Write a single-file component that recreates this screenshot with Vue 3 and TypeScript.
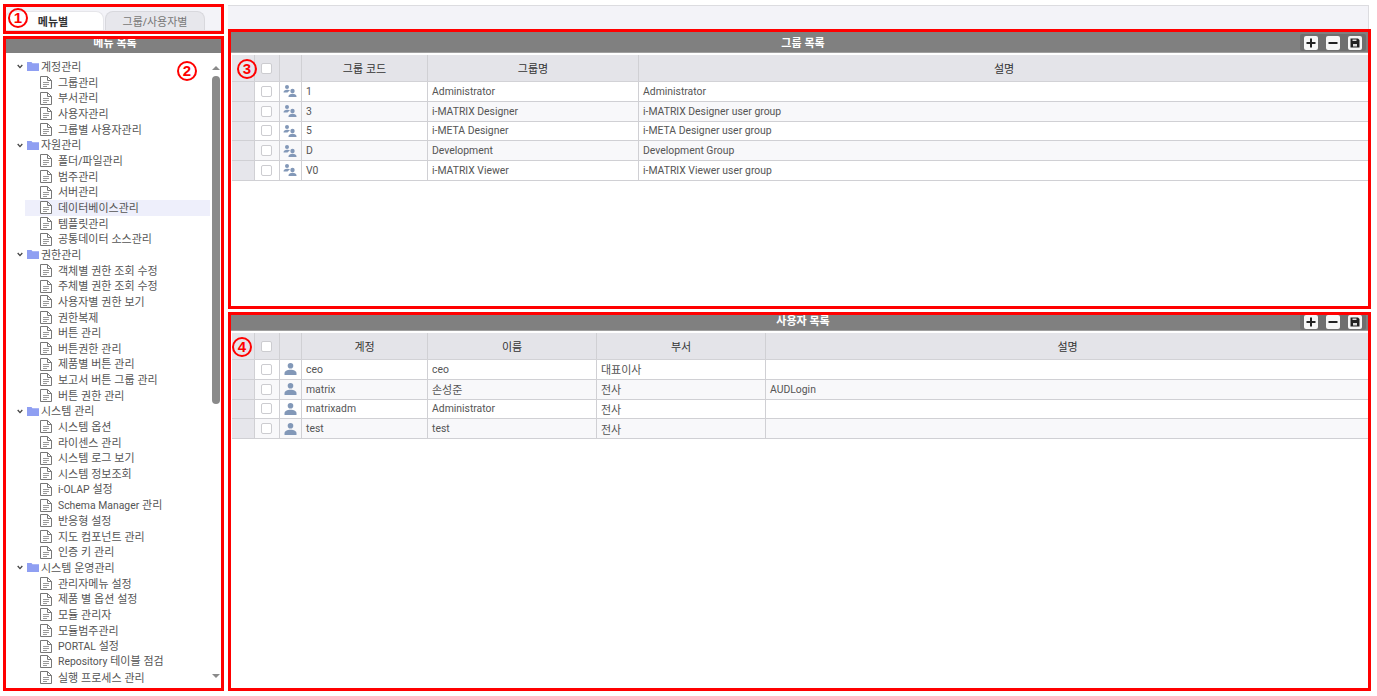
<script setup lang="ts">
interface Node { label: string; children: string[] }
const tree: Node[] = [
  { label: '계정관리', children: ['그룹관리', '부서관리', '사용자관리', '그룹별 사용자관리'] },
  { label: '자원관리', children: ['폴더/파일관리', '범주관리', '서버관리', '데이터베이스관리', '템플릿관리', '공통데이터 소스관리'] },
  { label: '권한관리', children: ['객체별 권한 조회 수정', '주체별 권한 조회 수정', '사용자별 권한 보기', '권한복제', '버튼 관리', '버튼권한 관리', '제품별 버튼 관리', '보고서 버튼 그룹 관리', '버튼 권한 관리'] },
  { label: '시스템 관리', children: ['시스템 옵션', '라이센스 관리', '시스템 로그 보기', '시스템 정보조회', 'i-OLAP 설정', 'Schema Manager 관리', '반응형 설정', '지도 컴포넌트 관리', '인증 키 관리'] },
  { label: '시스템 운영관리', children: ['관리자메뉴 설정', '제품 별 옵션 설정', '모듈 관리자', '모듈범주관리', 'PORTAL 설정', 'Repository 테이블 점검', '실행 프로세스 관리'] },
]
const groupCols = ['그룹 코드', '그룹명', '설명']
const groupRows = [
  ['1', 'Administrator', 'Administrator'],
  ['3', 'i-MATRIX Designer', 'i-MATRIX Designer user group'],
  ['5', 'i-META Designer', 'i-META Designer user group'],
  ['D', 'Development', 'Development Group'],
  ['V0', 'i-MATRIX Viewer', 'i-MATRIX Viewer user group'],
]
const userCols = ['계정', '이름', '부서', '설명']
const userRows = [
  ['ceo', 'ceo', '대표이사', ''],
  ['matrix', '손성준', '전사', 'AUDLogin'],
  ['matrixadm', 'Administrator', '전사', ''],
  ['test', 'test', '전사', ''],
]
// Latin runs are set in a narrower face than the Hangul around them
const segs = (s: string): string[] =>
  s.split(/([A-Za-z0-9][A-Za-z0-9 \-]*[A-Za-z0-9]|[A-Za-z0-9])/).filter(Boolean)
const isLat = (s: string): boolean => /^[A-Za-z0-9]/.test(s)
</script>

<template>
  <div class="page">
    <aside class="side">
      <div class="tabs">
        <div class="tab active">메뉴별</div>
        <div class="tab">그룹/사용자별</div>
      </div>
      <div class="bar side-bar">메뉴 목록</div>
      <div class="tree-wrap">
        <ul class="tree">
          <template v-for="n in tree" :key="n.label">
            <li class="row parent">
              <svg class="chev" width="6" height="5" viewBox="0 0 6 5"><path d="M.7 1 3 3.6 5.3 1" fill="none" stroke="#444" stroke-width="1.3" /></svg>
              <svg class="folder" width="12" height="9" viewBox="0 0 12 9"><path d="M0 0h4.5l1 1.2H12V9H0z" fill="#8f9ff2" /></svg>
              <span>{{ n.label }}</span>
            </li>
            <li v-for="c in n.children" :key="n.label + c" class="row leaf" :class="{ sel: c === '데이터베이스관리' }">
              <svg class="doc" width="12" height="13" viewBox="0 0 12 13"><path d="M.5.5h7l4 4v8H.5z M7.5.5v4h4" fill="#fff" stroke="#777" /><path d="M3 6.5h6M3 8.5h6M3 10.5h4" stroke="#999" fill="none" /></svg>
              <span><span v-for="(t, k) in segs(c)" :key="k" :class="{ lat: isLat(t) }">{{ t }}</span></span>
            </li>
          </template>
        </ul>
        <div class="scroll">
          <i class="arrow up"></i>
          <div class="thumb"></div>
          <div class="grow"></div>
          <i class="arrow down"></i>
        </div>
      </div>
    </aside>

    <main class="main">
      <div class="strip"></div>

      <section class="panel first">
        <div class="bar main-bar">
          <span>그룹 목록</span>
          <div class="tools">
            <b><svg width="10" height="10" viewBox="0 0 10 10"><path d="M5 .5v9M.5 5h9" stroke="#222" stroke-width="2" /></svg></b>
            <b><svg width="10" height="10" viewBox="0 0 10 10"><path d="M.5 5h9" stroke="#222" stroke-width="2" /></svg></b>
            <b><svg width="10" height="10" viewBox="0 0 10 10"><path d="M.5.5h7.5l1.500 1.500v7.500h-9z" fill="#222" /><path d="M2.500 1.500h4v1.500h-4z" fill="#ddd" /><path d="M3 6h4v2.500H3z" fill="#ddd" /></svg></b>
          </div>
        </div>
        <div class="grid group-grid head">
          <div class="c num"></div>
          <div class="c ck"><i class="box"></i></div>
          <div class="c ic"></div>
          <div v-for="h in groupCols" :key="h" class="c th">{{ h }}</div>
        </div>
        <div v-for="(r, i) in groupRows" :key="r[0]" class="grid group-grid body" :class="{ odd: i % 2 === 1 }">
          <div class="c num"></div>
          <div class="c ck"><i class="box"></i></div>
          <div class="c ic">
            <svg width="14" height="12" viewBox="0 0 14 12" fill="#8298b8"><circle cx="4" cy="2" r="2" /><path d="M.5 7.500c0-2 1.500-2.800 3.500-2.800 1.300 0 2.400.3 3 1.100-1 .3-2 .9-2.400 1.700z" /><circle cx="9.500" cy="6" r="2.200" /><path d="M5.500 12v-.5c0-2 1.800-2.800 4-2.800s4 .8 4 2.800v.5z" /></svg>
          </div>
          <div v-for="(v, j) in r" :key="j" class="c td"><span v-for="(t, k) in segs(v)" :key="k" :class="{ lat: isLat(t) }">{{ t }}</span></div>
        </div>
      </section>

      <section class="panel second">
        <div class="bar main-bar short">
          <span>사용자 목록</span>
          <div class="tools">
            <b><svg width="10" height="10" viewBox="0 0 10 10"><path d="M5 .5v9M.5 5h9" stroke="#222" stroke-width="2" /></svg></b>
            <b><svg width="10" height="10" viewBox="0 0 10 10"><path d="M.5 5h9" stroke="#222" stroke-width="2" /></svg></b>
            <b><svg width="10" height="10" viewBox="0 0 10 10"><path d="M.5.5h7.500l1.500 1.500v7.500h-9z" fill="#222" /><path d="M2.500 1.500h4v1.500h-4z" fill="#ddd" /><path d="M3 6h4v2.500H3z" fill="#ddd" /></svg></b>
          </div>
        </div>
        <div class="grid user-grid head">
          <div class="c num"></div>
          <div class="c ck"><i class="box"></i></div>
          <div class="c ic"></div>
          <div v-for="h in userCols" :key="h" class="c th">{{ h }}</div>
        </div>
        <div v-for="(r, i) in userRows" :key="r[0]" class="grid user-grid body" :class="{ odd: i % 2 === 1 }">
          <div class="c num"></div>
          <div class="c ck"><i class="box"></i></div>
          <div class="c ic">
            <svg width="13" height="12" viewBox="0 0 13 12" fill="#8298b8"><circle cx="6.500" cy="2.800" r="2.800" /><path d="M.5 12v-1.500c0-2.500 2.500-3.700 6-3.700s6 1.200 6 3.700V12z" /></svg>
          </div>
          <div v-for="(v, j) in r" :key="j" class="c td"><span v-for="(t, k) in segs(v)" :key="k" :class="{ lat: isLat(t) }">{{ t }}</span></div>
        </div>
      </section>
    </main>

    <div class="mark m-tabs"></div>
    <div class="mark m-side"></div>
    <div class="mark m-group"></div>
    <div class="mark m-user"></div>
    <div class="num-badge b1">1</div>
    <div class="num-badge b2">2</div>
    <div class="num-badge b3">3</div>
    <div class="num-badge b4">4</div>
  </div>
</template>

<style>
html, body { margin: 0; background: #fff; overflow: hidden; }
</style>

<style scoped>
.page {
  position: relative;
  width: 1377px;
  height: 696px;
  display: flex;
  overflow: hidden;
  font-family: "Noto Sans", "Noto Sans CJK KR", sans-serif;
  font-size: 11px;
  color: #444;
  background: #fff;
}
.lat { font-family: Roboto, "Noto Sans", sans-serif; font-size: 10.4px; }
.side { width: 222px; padding: 7px 0 0 5px; box-sizing: border-box; flex: none; }
.tabs {
  height: 24px;
  width: 217px;
  background: #f3f3f8;
  display: flex;
  align-items: flex-end;
  gap: 1px;
  border-bottom: 1px solid #dcdce0;
  box-sizing: border-box;
}
.tab {
  width: 100px;
  height: 19px;
  line-height: 20px;
  text-align: center;
  box-sizing: border-box;
  border: 1px solid #d8d8dd;
  border-bottom: 0;
  border-radius: 8px 8px 0 0;
  background: #e7e7ec;
  color: #777;
}
.tab.active { width: 99px; padding-right: 3px; background: #fff; color: #333; font-weight: 700; border-color: #e6e6ea; }
.side-bar { margin-top: 7px; width: 217px; height: 15px; line-height: 10px; padding-left: 3px; }
.bar {
  background: #808080;
  color: #fff;
  font-weight: 700;
  text-align: center;
  box-sizing: border-box;
}
.tree-wrap { display: flex; width: 217px; height: 638px; }
.tree { list-style: none; margin: 0; padding: 6px 0 0; width: 205px; flex: none; }
.row { height: 15.67px; line-height: 15.67px; display: flex; align-items: center; white-space: nowrap; color: #555; }
.parent { padding-left: 12px; }
.chev { margin-right: 4px; flex: none; }
.folder { margin-right: 2px; flex: none; }
.leaf { padding-left: 35px; }
.doc { margin-right: 6px; flex: none; }
.sel { background: #eeeffb; margin-left: 20px; padding-left: 15px; }
.scroll {
  width: 12px;
  padding: 13px 0 13px;
  box-sizing: border-box;
  display: flex;
  flex-direction: column;
  align-items: center;
}
.thumb { width: 8px; height: 328px; margin-top: 6px; border-radius: 4px; background: #8a8a8a; }
.grow { flex: 1; }
.arrow { width: 0; height: 0; border-left: 4px solid transparent; border-right: 4px solid transparent; }
.arrow.up { border-bottom: 4px solid #8a8a8a; }
.arrow.down { border-top: 4px solid #8a8a8a; }

.main { width: 1138px; margin-left: 9px; flex: none; padding-top: 5px; box-sizing: border-box; }
.strip {
  height: 24px;
  margin-left: -3px;
  background: #f3f3f8;
  border-top: 1px solid #dcdce0;
  border-right: 1px solid #dcdce0;
  box-sizing: border-box;
}
.panel.first { margin-top: 3px; height: 278px; }
.panel.second { margin-top: 5px; }
.main-bar {
  height: 21px;
  line-height: 22px;
  padding-left: 6px;
  position: relative;
  border-bottom: 1px solid #a0a0a0;
}
.main-bar.short { height: 16px; line-height: 11px; }
.tools {
  position: absolute;
  right: 3px;
  bottom: 1px;
  height: 17px;
  padding: 0 4px;
  display: flex;
  align-items: center;
  gap: 8px;
  background: #6f6f6f;
  border-radius: 2px;
}
.short .tools { top: -1px; bottom: auto; height: 16px; }
.tools b {
  width: 14px;
  height: 14px;
  background: #f6f6f6;
  border-radius: 2px;
  display: flex;
  align-items: center;
  justify-content: center;
}
.grid { display: grid; box-sizing: border-box; margin-left: 1px; }
.group-grid { grid-template-columns: 23px 25px 22px 126px 211px 1fr; }
.user-grid { grid-template-columns: 23px 25px 22px 126px 169px 169px 1fr; }
.head { height: 27px; background: #e4e4e9; border-bottom: 1px solid #d2d2d6; margin-top: 2px; }
.body { height: 19.75px; border-bottom: 1px solid #d0d0d4; background: #fff; }
.body.odd { background: #f8f8fa; }
.c { display: flex; align-items: center; box-sizing: border-box; border-right: 1px solid #d0d0d4; min-width: 0; white-space: pre; }
.c:last-child { border-right: 0; }
.num { background: #e6e6eb; }
.ck, .ic { justify-content: center; padding-right: 1px; }
.th { justify-content: center; color: #333; padding-bottom: 1px; }
.td { padding-left: 4px; color: #555; }
.box { width: 11px; height: 11px; box-sizing: border-box; background: #fff; border: 1px solid #ccccd0; border-radius: 2px; }

.mark { position: absolute; border: 3px solid #f00; box-sizing: border-box; pointer-events: none; }
.m-tabs { left: 3px; top: 4px; width: 221px; height: 30px; }
.m-side { left: 3px; top: 36px; width: 221px; height: 655px; }
.m-group { left: 228px; top: 29px; width: 1143px; height: 280px; }
.m-user { left: 228px; top: 312px; width: 1143px; height: 379px; }
.num-badge {
  position: absolute;
  width: 20px;
  height: 20px;
  border: 2px solid #f00;
  border-radius: 50%;
  box-sizing: border-box;
  color: #f00;
  font: 700 15px/16px "Liberation Sans", sans-serif;
  text-align: center;
}
.b1 { left: 8px; top: 8px; }
.b2 { left: 177px; top: 61px; }
.b3 { left: 237px; top: 59px; }
.b4 { left: 232px; top: 337px; }
</style>
